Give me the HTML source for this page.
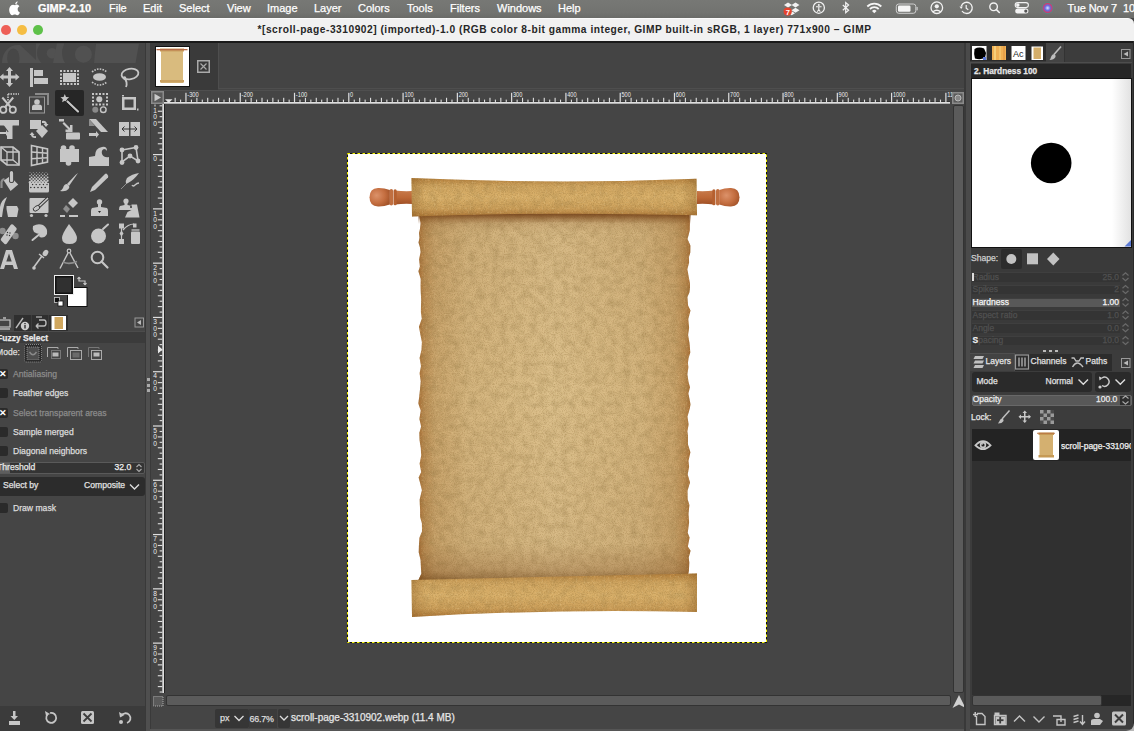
<!DOCTYPE html>
<html><head><meta charset="utf-8">
<style>
*{margin:0;padding:0;box-sizing:border-box}
html,body{width:1134px;height:731px;overflow:hidden;background:#454545;font-family:"Liberation Sans",sans-serif}
.a{position:absolute}
#menubar{left:0;top:0;width:1134px;height:18px;background:linear-gradient(180deg,#777875 0%,#727370 70%,#6a6b68 100%);color:#fff;font-size:12px}
#menubar span{position:absolute;top:2px;white-space:nowrap;font-size:11px;-webkit-text-stroke:0.25px #fff}
#titlebar{left:0;top:18px;width:1133.5px;height:23px;background:#f1f1f1;border-top:1px solid #fafafa;border-top-right-radius:6px}
.tl{position:absolute;top:6.3px;width:9.8px;height:9.8px;border-radius:50%}
#title{position:absolute;left:-2.5px;width:1134px;top:5px;text-align:center;font-size:10.2px;font-weight:bold;letter-spacing:0.52px;color:#262626;white-space:nowrap}
#blackline{left:0;top:41px;width:1134px;height:2px;background:#1a1a1a}
#toolbox{left:0;top:43px;width:146px;height:688px;background:#454545}
#sep1{left:145px;top:43px;width:6px;height:688px;background:#4f4f4f;border-left:1px solid #393939;border-right:1px solid #3a3a3a}
.txt{white-space:nowrap;line-height:1.15;-webkit-text-stroke:0.25px currentColor}
.b{font-weight:bold}
.cb{left:-2px;width:10px;height:10px;background:#2a2a2a;border-radius:2px;color:#fff;font-size:9px;line-height:10px;text-align:center;font-weight:bold}
.cb span{display:block}
.sl{left:971.7px;width:148.5px;height:9.5px;background:#343434;border-top:1px solid #3f3f3f}
.sll{left:972.5px;font-size:8.5px;line-height:10px}
.slv{right:15px;font-size:8.5px;line-height:10px;text-align:right}
#imgwin{left:151px;top:43px;width:815px;height:688px;background:#454545}
#sep2{left:966px;top:43px;width:4px;height:688px;background:#4d4d4d}
#dock{left:970px;top:43px;width:164px;height:688px;background:#393939}
</style></head><body>
<div id="menubar" class="a">
 <span style="left:38px;font-weight:bold">GIMP-2.10</span>
 <span style="left:109px">File</span>
 <span style="left:143px">Edit</span>
 <span style="left:179px">Select</span>
 <span style="left:227px">View</span>
 <span style="left:267px">Image</span>
 <span style="left:314px">Layer</span>
 <span style="left:358px">Colors</span>
 <span style="left:407px">Tools</span>
 <span style="left:450px">Filters</span>
 <span style="left:497px">Windows</span>
 <span style="left:558px">Help</span>
 <span style="left:1067.5px;font-size:11px;letter-spacing:-0.1px">Tue Nov 7</span>
 <span style="left:1123px;font-size:11px">10:</span>
</div>
<svg class="a" style="left:0;top:0" width="1134" height="18" viewBox="0 0 1134 18">
 <!-- apple -->
 <path d="M16.2 4.6 C17.6 4.6 18.7 5.3 19.4 6.2 C18.1 7 17.6 8.2 17.7 9.4 C17.8 10.8 18.6 11.8 19.9 12.4 C19.4 13.8 18.4 15.2 17.2 15.2 C16.2 15.2 15.9 14.6 14.8 14.6 C13.6 14.6 13.2 15.2 12.3 15.2 C10.9 15.2 9.6 13 9.3 11.2 C8.8 8 10.5 4.8 13 4.8 C13.9 4.8 14.5 5.3 15.1 5.3 C15.6 5.3 15.8 4.6 16.2 4.6 Z" fill="#fff"/>
 <path d="M15.2 4.2 C15.2 2.9 16.1 1.5 17.6 1.2 C17.7 2.6 16.6 4.1 15.2 4.2 Z" fill="#fff"/>
 <!-- dropbox -->
 <g fill="#f2f2f2">
  <path d="M788 2.5 L792 5 L788 7.5 L784 5 Z"/><path d="M795.5 2.5 L799.5 5 L795.5 7.5 L791.5 5 Z"/>
  <path d="M788 7.8 L792 10.3 L788 12.8 L784 10.3 Z"/><path d="M795.5 7.8 L799.5 10.3 L795.5 12.8 L791.5 10.3 Z"/>
  <path d="M791.7 11.2 L795 13.3 L791.7 15.3 L788.5 13.3 Z"/>
 </g>
 <circle cx="787.7" cy="11.6" r="4.1" fill="#e5432d"/>
 <text x="785.7" y="14.6" font-size="7.5" font-weight="bold" font-family="Liberation Sans" fill="#fff">7</text>
 <!-- accessibility -->
 <circle cx="818.8" cy="7.7" r="5.6" fill="none" stroke="#f2f2f2" stroke-width="1.3"/>
 <circle cx="818.8" cy="5" r="1" fill="#f2f2f2"/>
 <path d="M816 6.8 L821.6 6.8 M818.8 6.8 L818.8 9.5 M818.8 9.5 L817.3 11.7 M818.8 9.5 L820.3 11.7" stroke="#f2f2f2" stroke-width="1.1" fill="none"/>
 <!-- bluetooth -->
 <path d="M842.8 5 L848.6 10.3 L845.7 12.8 L845.7 2.5 L848.6 5 L842.8 10.3" stroke="#f2f2f2" stroke-width="1.2" fill="none"/>
 <!-- wifi -->
 <path d="M867.3 6.5 A10 10 0 0 1 881.3 6.5" stroke="#f5f5f5" stroke-width="1.8" fill="none"/>
 <path d="M869.9 9 A6.3 6.3 0 0 1 878.7 9" stroke="#f5f5f5" stroke-width="1.8" fill="none"/>
 <path d="M874.3 13.3 L872 10.9 A3.2 3.2 0 0 1 876.6 10.9 Z" fill="#f5f5f5"/>
 <!-- battery -->
 <rect x="896.3" y="4" width="19.5" height="9.3" rx="2.5" fill="none" stroke="#cfcfcf" stroke-width="1"/>
 <rect x="898" y="5.6" width="12.5" height="6.1" rx="1.2" fill="#f5f5f5"/>
 <rect x="916.5" y="7" width="1.2" height="3.3" fill="#cfcfcf"/>
 <!-- user -->
 <circle cx="936.8" cy="7.7" r="5.8" fill="none" stroke="#f2f2f2" stroke-width="1.3"/>
 <circle cx="936.8" cy="6.3" r="2.1" fill="#f2f2f2"/>
 <path d="M933 11.8 Q936.8 8.6 940.6 11.8" stroke="#f2f2f2" stroke-width="1.5" fill="none"/>
 <!-- time machine -->
 <path d="M961.3 6.2 A5.6 5.6 0 1 1 962 11" stroke="#f2f2f2" stroke-width="1.3" fill="none"/>
 <path d="M959.5 6.5 L962.8 6.5 L961.2 9 Z" fill="#f2f2f2"/>
 <path d="M966.2 5 L966.2 8.2 L968.3 9.8" stroke="#f2f2f2" stroke-width="1.2" fill="none"/>
 <!-- search -->
 <circle cx="993.6" cy="6.8" r="3.8" fill="none" stroke="#f2f2f2" stroke-width="1.4"/>
 <path d="M996.4 9.6 L999.3 12.5" stroke="#f2f2f2" stroke-width="1.6" stroke-linecap="round"/>
 <!-- control center -->
 <rect x="1015.2" y="2.6" width="13.2" height="5" rx="2.5" fill="none" stroke="#f2f2f2" stroke-width="1.1"/>
 <circle cx="1017.8" cy="5.1" r="1.8" fill="#f2f2f2"/>
 <rect x="1015.2" y="8.6" width="13.2" height="5" rx="2.5" fill="#f2f2f2"/>
 <circle cx="1025.8" cy="11.1" r="1.6" fill="#555"/>
 <!-- siri -->
 <defs><radialGradient id="siri" cx="0.5" cy="0.5" r="0.5"><stop offset="0" stop-color="#d8e6ff"/><stop offset="0.45" stop-color="#6a6adf"/><stop offset="0.8" stop-color="#c8406a"/><stop offset="1" stop-color="#2aa39a"/></radialGradient></defs>
 <circle cx="1047.6" cy="8" r="5.8" fill="url(#siri)"/>
</svg>

<div id="titlebar" class="a">
 <div class="tl" style="left:1px;background:#ee5f57"></div>
 <div class="tl" style="left:17px;background:#f5bd43"></div>
 <div class="tl" style="left:33px;background:#5ec149"></div>
 <div id="title">*[scroll-page-3310902] (imported)-1.0 (RGB color 8-bit gamma integer, GIMP built-in sRGB, 1 layer) 771x900 – GIMP</div>
</div>
<div id="blackline" class="a"></div>
<div id="toolbox" class="a"></div>
<svg class="a" style="left:0;top:0" width="150" height="731" viewBox="0 0 150 731">
<g id="wilber" clip-path="url(#wclip)">
 <clipPath id="wclip"><rect x="0" y="43.5" width="146" height="19.5"/></clipPath>
 <path d="M2 63 C2 52 9 45 18 45 L36 45 L36 63 Z" fill="#515151"/>
 <path d="M20 45 L36 45 L36 60 Z" fill="#474747"/>
 <ellipse cx="13.3" cy="58" rx="6.2" ry="9.5" fill="#474747"/>
 <path d="M36 43 L40 43 L45 63 L36 63 Z" fill="#515151"/>
 <circle cx="50" cy="53" r="13" fill="#474747"/>
 <circle cx="52" cy="53.2" r="5.3" fill="#515151"/>
 <path d="M57 43 L64 43 L66 63 L53 63 Z" fill="#515151"/>
 <circle cx="79.5" cy="53" r="17.5" fill="#474747"/>
 <circle cx="83.4" cy="54.3" r="8.5" fill="#515151"/>
 <path d="M96 43.5 L139 43.5 L135.5 63 L94 63 Z" fill="#515151"/>
</g>
<g fill="#c6c6c6" stroke="none">
 <!-- r1 move -->
 <path d="M9.5 67 L13 71 L11 71 L11 75.5 L15.5 75.5 L15.5 73.5 L19.5 77 L15.5 80.5 L15.5 78.5 L11 78.5 L11 83 L13 83 L9.5 87 L6 83 L8 83 L8 78.5 L3.5 78.5 L3.5 80.5 L-0.5 77 L3.5 73.5 L3.5 75.5 L8 75.5 L8 71 L6 71 Z"/>
 <!-- align -->
 <rect x="30" y="68" width="3" height="19"/>
 <rect x="34" y="70" width="9" height="6"/>
 <rect x="34" y="78" width="14" height="6"/>
 <!-- rect select -->
 <g><rect x="63" y="73" width="13" height="9"/>
 <rect x="60" y="70" width="2" height="2"/><rect x="63.5" y="70" width="2" height="2"/><rect x="67" y="70" width="2" height="2"/><rect x="70.5" y="70" width="2" height="2"/><rect x="74" y="70" width="2" height="2"/><rect x="77" y="70" width="2" height="2"/>
 <rect x="60" y="83" width="2" height="2"/><rect x="63.5" y="83" width="2" height="2"/><rect x="67" y="83" width="2" height="2"/><rect x="70.5" y="83" width="2" height="2"/><rect x="74" y="83" width="2" height="2"/><rect x="77" y="83" width="2" height="2"/>
 <rect x="60" y="73.5" width="2" height="2"/><rect x="60" y="77" width="2" height="2"/><rect x="60" y="80" width="2" height="2"/>
 <rect x="77" y="73.5" width="2" height="2"/><rect x="77" y="77" width="2" height="2"/><rect x="77" y="80" width="2" height="2"/></g>
 <!-- ellipse select -->
 <ellipse cx="99.5" cy="77" rx="6.5" ry="3.8"/>
 <path d="M92 72 Q99.5 66 107 72" fill="none" stroke="#c6c6c6" stroke-width="1.6" stroke-dasharray="1.6 1.2"/>
 <path d="M92 82 Q99.5 88 107 82" fill="none" stroke="#c6c6c6" stroke-width="1.6" stroke-dasharray="1.6 1.2"/>
 <!-- lasso -->
 <ellipse cx="130" cy="74" rx="8.5" ry="5.2" fill="none" stroke="#c6c6c6" stroke-width="1.8" transform="rotate(-10 130 74)"/>
 <path d="M124 78 Q128 82 126 87" fill="none" stroke="#c6c6c6" stroke-width="1.8"/>
 <circle cx="124.5" cy="78" r="1.8"/>
 <!-- r2 scissors -->
 <path d="M8 94 L19 94 M8 94 L8 101" stroke="#c6c6c6" stroke-width="1.6" stroke-dasharray="1.5 1" fill="none"/>
 <path d="M2.3 97.5 L11 107.5 M13.2 97.5 L4.8 107.5" stroke="#c6c6c6" stroke-width="2" fill="none"/>
 <circle cx="3.3" cy="109.8" r="3.1" fill="none" stroke="#c6c6c6" stroke-width="1.8"/>
 <circle cx="12.8" cy="109.8" r="3.1" fill="none" stroke="#c6c6c6" stroke-width="1.8"/>
 <!-- foreground select -->
 <path d="M35 93 L49 93 L49 105 L47 105 L47 95 L35 95 Z" fill="#8a8a8a"/>
 <rect x="29.5" y="97" width="15" height="16" fill="none" stroke="#9a9a9a" stroke-width="1"/>
 <circle cx="37" cy="102" r="2.8"/>
 <path d="M32 107 Q32 104.5 35 104.5 L39 104.5 Q42 104.5 42 107 L42 110 L32 110 Z"/>
</g>
<!-- magic wand active -->
<rect x="55" y="90" width="29" height="26" rx="2" fill="#262626"/>
<g fill="#c6c6c6">
 <path d="M64.80 94.00 L66.03 96.90 L69.17 97.18 L66.80 99.25 L67.50 102.32 L64.80 100.70 L62.10 102.32 L62.80 99.25 L60.43 97.18 L63.57 96.90 Z"/>
 <path d="M67.5 101.5 L78 111.5" stroke="#111" stroke-width="3.4" stroke-linecap="round"/>
 <path d="M67.5 101.5 L78 111.5" stroke="#c6c6c6" stroke-width="2.3" stroke-linecap="round"/>
</g>
<g fill="#c6c6c6">
 <!-- by color select -->
 <g><rect x="92" y="93" width="2" height="2"/><rect x="95.5" y="93" width="2" height="2"/><rect x="99" y="93" width="2" height="2"/><rect x="102.5" y="93" width="2" height="2"/><rect x="106" y="93" width="2" height="2"/>
 <rect x="92" y="103.5" width="2" height="2"/><rect x="95.5" y="103.5" width="2" height="2"/><rect x="99" y="103.5" width="2" height="2"/><rect x="102.5" y="103.5" width="2" height="2"/><rect x="106" y="103.5" width="2" height="2"/>
 <rect x="92" y="96.5" width="2" height="2"/><rect x="92" y="100" width="2" height="2"/><rect x="106" y="96.5" width="2" height="2"/><rect x="106" y="100" width="2" height="2"/></g>
 <circle cx="99.3" cy="99.3" r="3"/>
 <circle cx="95.3" cy="109.7" r="3" fill="#8a8a8a"/>
 <circle cx="103.3" cy="109.7" r="2.8" fill="none" stroke="#c6c6c6" stroke-width="1.4"/>
 <!-- crop -->
 <path d="M122 97 L136 97 L136 110 L122 110 Z M124.5 99.5 L124.5 107.5 L133.5 107.5 L133.5 99.5 Z" fill-rule="evenodd"/>
 <rect x="122" y="95" width="2" height="1.5"/><rect x="137" y="108.5" width="1.5" height="2"/>
 <!-- r3 unified transform -->
 <path d="M0 120 L19 120 L19 125.5 L12.5 125.5 L12.5 139 L7 139 L7 133.5 L8.5 131.5 L7 129.5 Z"/>
 <path d="M0 120 L12.5 120 L12.5 125.5 L0 125.5 Z"/>
 <path d="M0 132 L6 132 L6 130 L8.5 133 L6 136 L6 134 L0 134 Z"/>
 <!-- rotate -->
 <rect x="30" y="120" width="11" height="9"/>
 <path d="M42 125 L48 131 L42 138 L36 131 Z"/>
 <path d="M42 121 Q46 120 47 124 L48.5 124 L46 127 L43.5 124 L45 124 Q44.5 122.5 42 123 Z"/>
 <path d="M36 138 Q31.5 138.5 31 135 L29.5 135 L32 132 L34.5 135 L33 135 Q33.3 136.5 36 136 Z"/>
 <!-- scale -->
 <rect x="59" y="119" width="5" height="2.5"/>
 <path d="M64 122 L70 128 L70 125 L72.5 125 L72.5 132 L65.5 132 L65.5 129.5 L68.5 129.5 L62.5 123.5 Z"/>
 <rect x="66" y="132.5" width="14" height="7" rx="1"/>
 <!-- shear -->
 <path d="M89 119 L96 119 L108 132 L101 132 Z"/>
 <path d="M89 119 L89 126 L95 126 Z" fill="#8e8e8e"/>
 <path d="M89 133 L96 133 L96 131 L99 134.5 L96 138 L96 136 L89 136 Z"/>
 <!-- flip -->
 <path d="M119 122 L129 122 L129 136 L119 136 Z M130.5 122 L140 122 L140 136 L130.5 136 Z"/>
 <path d="M122 129 L137 129 M122 129 L124.5 126.5 M122 129 L124.5 131.5 M137 129 L134.5 126.5 M137 129 L134.5 131.5" stroke="#333" stroke-width="1" fill="none"/>
 <!-- r4 perspective cube -->
 <path d="M1 147 L13 147 L19 152 L19 165 L7 165 L1 160 Z" fill="none" stroke="#c6c6c6" stroke-width="1.7"/>
 <path d="M1 147 L7 152 L19 152 M7 152 L7 165 M1 160 L13 160 L19 165 M13 147 L13 160" stroke="#c6c6c6" stroke-width="1.3" fill="none"/>
 <!-- grid -->
 <path d="M31.5 145.5 L47.5 149 L47.5 162 L31.5 165.5 Z" fill="none" stroke="#c6c6c6" stroke-width="1.6"/>
 <path d="M37 146.5 L37 164.5 M42.5 147.7 L42.5 163.3 M31.5 152 L47.5 153.3 M31.5 158.7 L47.5 157.7" stroke="#c6c6c6" stroke-width="1.4"/>
 <!-- cage -->
 <path d="M60 149 L79 149 L79 162 L60 162 Z"/>
 <circle cx="63.5" cy="148" r="2.8"/><circle cx="72" cy="148" r="2.8"/><circle cx="68.5" cy="163" r="2.8"/>
 <!-- warp wave -->
 <path d="M89 166 L109 166 L109 157 Q104 158 102 154 Q101 150 104 149 Q106 149 107 151 Q107 146 102 147 Q95 148 95 156 L89 157 Z"/>
 <!-- handle -->
 <path d="M122 150 L136 147.5 L138 161 L130 156 L122 162 Z" fill="none" stroke="#c6c6c6" stroke-width="1.6"/>
 <circle cx="122" cy="150" r="2.4"/><circle cx="136" cy="147.5" r="2.4"/><circle cx="138" cy="161" r="2.4"/><circle cx="130" cy="156" r="2.4"/><circle cx="122" cy="162.5" r="2.4"/>
 <!-- r5 bucket -->
 <path d="M1.5 188 L1.5 182 Q2 179.5 4.5 179" stroke="#8e8e8e" stroke-width="2.2" fill="none"/>
 <path d="M3.8 180.5 L10 176.3 L18.2 184.5 L10.6 191 Z"/>
 <rect x="9" y="170.5" width="5" height="12.5" rx="2.5" fill="#333"/>
 <rect x="9.8" y="171" width="3.4" height="11.3" rx="1.7"/>
 <!-- blend -->
 <path d="M29 183 L49 183 L49 191 Q49 192.5 47.5 192.5 L30.5 192.5 Q29 192.5 29 191 Z"/>
 <g fill="#333"><circle cx="30.80" cy="187.5" r="0.8"/><circle cx="34.40" cy="187.5" r="0.8"/><circle cx="38.00" cy="187.5" r="0.8"/><circle cx="41.60" cy="187.5" r="0.8"/><circle cx="45.20" cy="187.5" r="0.8"/><circle cx="32.60" cy="184.5" r="0.7"/><circle cx="36.20" cy="184.5" r="0.7"/><circle cx="39.80" cy="184.5" r="0.7"/><circle cx="43.40" cy="184.5" r="0.7"/><circle cx="47.00" cy="184.5" r="0.7"/></g>
</g>
<g fill="#c6c6c6"><circle cx="30.00" cy="172.50" r="0.45"/><circle cx="33.20" cy="172.50" r="0.45"/><circle cx="36.40" cy="172.50" r="0.45"/><circle cx="39.60" cy="172.50" r="0.45"/><circle cx="42.80" cy="172.50" r="0.45"/><circle cx="46.00" cy="172.50" r="0.45"/><circle cx="31.60" cy="174.15" r="0.59"/><circle cx="34.80" cy="174.15" r="0.59"/><circle cx="38.00" cy="174.15" r="0.59"/><circle cx="41.20" cy="174.15" r="0.59"/><circle cx="44.40" cy="174.15" r="0.59"/><circle cx="47.60" cy="174.15" r="0.59"/><circle cx="30.00" cy="175.80" r="0.73"/><circle cx="33.20" cy="175.80" r="0.73"/><circle cx="36.40" cy="175.80" r="0.73"/><circle cx="39.60" cy="175.80" r="0.73"/><circle cx="42.80" cy="175.80" r="0.73"/><circle cx="46.00" cy="175.80" r="0.73"/><circle cx="31.60" cy="177.45" r="0.87"/><circle cx="34.80" cy="177.45" r="0.87"/><circle cx="38.00" cy="177.45" r="0.87"/><circle cx="41.20" cy="177.45" r="0.87"/><circle cx="44.40" cy="177.45" r="0.87"/><circle cx="47.60" cy="177.45" r="0.87"/><circle cx="30.00" cy="179.10" r="1.01"/><circle cx="33.20" cy="179.10" r="1.01"/><circle cx="36.40" cy="179.10" r="1.01"/><circle cx="39.60" cy="179.10" r="1.01"/><circle cx="42.80" cy="179.10" r="1.01"/><circle cx="46.00" cy="179.10" r="1.01"/><circle cx="31.60" cy="180.75" r="1.15"/><circle cx="34.80" cy="180.75" r="1.15"/><circle cx="38.00" cy="180.75" r="1.15"/><circle cx="41.20" cy="180.75" r="1.15"/><circle cx="44.40" cy="180.75" r="1.15"/><circle cx="47.60" cy="180.75" r="1.15"/><circle cx="30.00" cy="182.40" r="1.29"/><circle cx="33.20" cy="182.40" r="1.29"/><circle cx="36.40" cy="182.40" r="1.29"/><circle cx="39.60" cy="182.40" r="1.29"/><circle cx="42.80" cy="182.40" r="1.29"/><circle cx="46.00" cy="182.40" r="1.29"/></g>
<g fill="#c6c6c6">
 <!-- paintbrush -->
 <path d="M75.5 175 L78 173 L69 186 L67 184 Z"/>
 <path d="M67 184 Q64 184 63 188 Q62 190 60 191 Q66 192 68.5 189 Q70 187 69 186 Z"/>
 <!-- pencil -->
 <path d="M107 174 Q109 176 108 177.5 L95 190 L90 192 L92 187 L105 174 Q106 173 107 174 Z"/>
 <!-- ink -->
 <path d="M139 173 Q132 174 127 178 Q125 181 126 184 L128 183 Q134 180 139 173 Z"/>
 <path d="M126 184 L121 189" stroke="#8e8e8e" stroke-width="1"/>
 <path d="M132 185 Q133 187 135 185 Q137 183 139 183" stroke="#c6c6c6" stroke-width="1.3" fill="none"/>
 <!-- r6 airbrush -->
 <path d="M7 197 Q1 200 0 207 L0 217 L2 217 L3 210 Q4 203 7 197 Z"/>
 <path d="M6.5 206 L17 206 L18.5 209 L17 217 L8 217 L6.5 209 Z"/>
 <!-- mypaint -->
 <rect x="29.5" y="198" width="19" height="15" rx="1"/>
 <circle cx="31.5" cy="215.5" r="1.6"/><circle cx="46" cy="215.5" r="1.6"/>
 <path d="M47.5 198.5 L39 206.5" stroke="#333" stroke-width="3.4" stroke-linecap="round"/>
 <path d="M47.5 198.5 L39 206.5" stroke="#c6c6c6" stroke-width="1.7" stroke-linecap="round"/>
 <ellipse cx="36.5" cy="208.3" rx="3.6" ry="2.2" transform="rotate(-35 36.5 208.3)" fill="#c6c6c6" stroke="#333" stroke-width="0.9"/>
 <!-- eraser -->
 <path d="M73 198 L78 203 L73 208 L68 203 Z"/>
 <path d="M66 205 L70 209 L67 213 L63 209 Z" fill="#8e8e8e"/>
 <rect x="60" y="215" width="5" height="2"/><rect x="69" y="215" width="9" height="2"/>
 <!-- clone -->
 <circle cx="99.5" cy="202" r="2.7"/>
 <path d="M98 204 L101 204 L101 207 L107 208 Q108 209 108 211 L108 216 L91 216 L91 211 Q91 209 92 208 L98 207 Z"/>
 <path d="M98 211 L101 211 L99.5 213 Z" fill="#222"/>
 <!-- persp clone -->
 <circle cx="126" cy="201" r="2.6"/>
 <path d="M124.5 203 L127.5 203 L127.5 205 L132 206 Q132.5 207 132.5 210 L119 210 Q119 207 120 206 L124.5 205 Z"/>
 <path d="M131.5 204.5 L137 204.5 L139.5 217.5 L125 217.5 L127.5 212 L131.5 210 Z"/>
 <circle cx="131" cy="207" r="0.9" fill="#222"/>
 <!-- r7 heal -->
 <circle cx="2.5" cy="231" r="3.2" fill="#8e8e8e"/>
 <circle cx="15.5" cy="236" r="3.2" fill="#8e8e8e"/>
 <path d="M12 226 L15 229 L5.5 242.5 L2.5 239.5 Z" stroke="#c6c6c6" stroke-width="3.4" stroke-linejoin="round"/>
 <g fill="#333"><circle cx="7.5" cy="232.5" r="0.7"/><circle cx="10" cy="233" r="0.7"/><circle cx="7" cy="235" r="0.7"/><circle cx="9.5" cy="235.5" r="0.7"/></g>
 <!-- smudge -->
 <path d="M33 226 Q38 223 43 225 Q48 228 47 234 Q45 238 41 237.5 Q38 237 40 234 Q37 234 34 232 Q32 229 33 226 Z"/>
 <path d="M41 233 L32.5 240" stroke="#c6c6c6" stroke-width="2" stroke-linecap="round"/>
 <!-- blur -->
 <path d="M69 224 Q77 234 77 238 Q77 244 69.5 244 Q62 244 62 238 Q62 234 69 224 Z"/>
 <!-- dodge -->
 <circle cx="98.5" cy="236" r="7.5"/>
 <path d="M103 229 L108 224.5" stroke="#c6c6c6" stroke-width="2" stroke-linecap="round"/>
 <!-- paths -->
 <rect x="119" y="223.5" width="5" height="5"/><rect x="119" y="239" width="5" height="5"/>
 <path d="M121.5 228 L121.5 239" stroke="#c6c6c6" stroke-width="1.2"/>
 <path d="M121.5 230.5 L123.5 233.5 L121.5 236.5 L119.5 233.5 Z"/>
 <path d="M123 230 Q128 224 134 224" stroke="#c6c6c6" stroke-width="1.2" fill="none"/>
 <rect x="133" y="223.5" width="3.5" height="4"/>
 <rect x="131" y="231.5" width="9" height="12.5" rx="1"/>
 <rect x="131.5" y="229" width="8" height="2" fill="#9a9a9a"/>
 <!-- r8 text A -->
 <path d="M6 250 L12 250 L18 269 L14 269 L12.7 265 L5.3 265 L4 269 L0 269 Z M6.3 261.5 L11.7 261.5 L9 253.5 Z" fill-rule="evenodd"/>
 <!-- color picker -->
 <ellipse cx="45.5" cy="253" rx="2.5" ry="3.4" transform="rotate(35 45.5 253)"/>
 <path d="M39 254 L44 258" stroke="#c6c6c6" stroke-width="1.5"/>
 <path d="M42 256 L34 267" stroke="#c6c6c6" stroke-width="1.6"/>
 <circle cx="34" cy="268" r="1.8"/>
 <!-- measure -->
 <circle cx="69" cy="251" r="1.8" fill="none" stroke="#c6c6c6" stroke-width="1.2"/>
 <path d="M68 253 L60 268.5 M70 253 L78 268" stroke="#c6c6c6" stroke-width="1.4" fill="none"/>
 <path d="M63 262 Q69 265 77 261.5" stroke="#8e8e8e" stroke-width="1.6" fill="none"/>
 <!-- zoom -->
 <circle cx="97.5" cy="257.5" r="5.8" fill="none" stroke="#c6c6c6" stroke-width="2"/>
 <path d="M101.5 261.5 L107.5 267.5" stroke="#c6c6c6" stroke-width="2.2" stroke-linecap="round"/>
</g>
<!-- fg/bg -->
<rect x="67.5" y="287.5" width="19.5" height="19" fill="#fff" stroke="#111" stroke-width="1"/>
<rect x="54.5" y="275.5" width="19" height="19" fill="#111" stroke="#eee" stroke-width="1"/>
<rect x="56.5" y="277.5" width="15" height="15" fill="#303030"/>
<path d="M79 277 L79 281 L85 281 L85 285 M85 285 L83.5 283 M85 285 L86.5 283 M79 277 L77.5 279 M79 277 L80.5 279" stroke="#c6c6c6" stroke-width="1.2" fill="none"/>
<rect x="54.5" y="297.5" width="5" height="5" fill="#111" stroke="#ccc" stroke-width="0.8"/>
<rect x="58" y="301" width="5" height="5" fill="#fff" stroke="#111" stroke-width="0.8"/>
</svg>

<!-- tool options tabs -->
<div class="a" style="left:14px;top:315px;width:54px;height:16px;background:#2f2f2f"></div>
<div class="a" style="left:31px;top:315px;width:1px;height:16px;background:#3c3c3c"></div>
<div class="a" style="left:48px;top:315px;width:1px;height:16px;background:#3c3c3c"></div>
<svg class="a" style="left:0;top:314px" width="150" height="20" viewBox="0 314 150 20">
 <g fill="none" stroke="#bbb" stroke-width="1.3">
  <rect x="-2" y="320" width="12" height="7"/>
  <path d="M3 318 L6 318 M-2 329 L10 329"/>
 </g>
 <path d="M16 328 L23 318" stroke="#bbb" stroke-width="1.4"/>
 <circle cx="25" cy="326" r="4.2" fill="#ccc"/>
 <rect x="24.3" y="325" width="1.4" height="3.5" fill="#2f2f2f"/><rect x="24.3" y="323" width="1.4" height="1.2" fill="#2f2f2f"/>
 <path d="M39 320 L44 320 Q46 320 46 323 Q46 326 44 326 L36 326 M36 326 L38.5 323.5 M36 326 L38.5 328.5" stroke="#bbb" stroke-width="1.4" fill="none"/>
 <path d="M42 317 L36 317" stroke="#bbb" stroke-width="1.2"/>
 <rect x="51.5" y="316" width="14.5" height="14" fill="#fff"/>
 <rect x="54.5" y="317" width="8.5" height="12" fill="#d0a75e"/>
 <rect x="135" y="318" width="8.5" height="9" fill="none" stroke="#999" stroke-width="1"/>
 <path d="M137 322.5 L141 320 L141 325 Z" fill="#bbb"/>
</svg>
<div class="a" style="left:0;top:331px;width:145px;height:12px;background:#3b3b3b;border-top:1px solid #4c4c4c"></div>

<div class="a txt b" style="left:-3px;top:333.5px;font-size:8.5px;color:#e8e8e8">Fuzzy Select</div>
<div class="a txt" style="left:-4px;top:348px;font-size:8.6px;color:#ddd">Mode:</div>
<!-- mode buttons -->
<div class="a" style="left:24px;top:344px;width:18px;height:18px;background:#2b2b2b;border-radius:2px"></div>
<svg class="a" style="left:0;top:340px" width="150" height="25" viewBox="0 340 150 25">
 <rect x="24.5" y="344.5" width="17" height="17.5" rx="1.5" fill="none" stroke="#8a8a8a" stroke-width="1" stroke-dasharray="1 1"/>
 <rect x="27" y="347" width="12" height="12.5" fill="#4e4e4e" stroke="#9a9a9a" stroke-width="0.8" stroke-dasharray="1 1"/>
 <path d="M29.5 352 Q33 357.5 36.5 352" stroke="#8a8a8a" stroke-width="1.4" fill="none"/>
 <g stroke="#aaa" stroke-width="1" fill="none">
  <path d="M47.5 357 L47.5 347.5 L58 347.5 L58 349"/>
  <rect x="51.5" y="350.5" width="9" height="8" stroke-dasharray="1 1"/>
  <path d="M67.5 357 L67.5 347.5 L78 347.5 L78 349"/>
  <rect x="70.5" y="350.5" width="11" height="9"/>
  <path d="M88.5 357 L88.5 347.5 L99 347.5 L99 349" stroke="#777"/>
  <rect x="91.5" y="350.5" width="10" height="9"/>
 </g>
 <rect x="52.5" y="352.5" width="6" height="4" fill="#bbb"/>
 <rect x="72.5" y="352.5" width="7" height="5" fill="#6a6a6a"/>
 <rect x="93.5" y="352.5" width="6" height="4" fill="#bbb"/>
</svg>
<!-- checkboxes -->
<div class="a cb" style="top:369px"><span>✕</span></div>
<div class="a txt" style="left:13px;top:370px;font-size:8.6px;color:#8c8c8c">Antialiasing</div>
<div class="a cb" style="top:388px"></div>
<div class="a txt" style="left:13px;top:389px;font-size:8.6px;color:#dcdcdc">Feather edges</div>
<div class="a cb" style="top:408px"><span>✕</span></div>
<div class="a txt" style="left:13px;top:409px;font-size:8.6px;color:#8c8c8c">Select transparent areas</div>
<div class="a cb" style="top:427px"></div>
<div class="a txt" style="left:13px;top:428px;font-size:8.6px;color:#dcdcdc">Sample merged</div>
<div class="a cb" style="top:446px"></div>
<div class="a txt" style="left:13px;top:447px;font-size:8.6px;color:#dcdcdc">Diagonal neighbors</div>
<!-- threshold -->
<div class="a" style="left:-2px;top:462px;width:147px;height:11.5px;background:#343434;border:1px solid #5a5a5a;border-radius:2px"></div>
<div class="a" style="left:-1px;top:463px;width:11px;height:9.5px;background:#5e5e5e"></div>
<div class="a txt" style="left:-3px;top:463px;font-size:8.6px;color:#e8e8e8">Threshold</div>
<div class="a txt" style="left:114.5px;top:463px;font-size:8.6px;color:#f0f0f0">32.0</div>
<svg class="a" style="left:134px;top:462px" width="10" height="12" viewBox="0 0 10 12"><path d="M2.5 5 L5 2.5 L7.5 5 M2.5 7 L5 9.5 L7.5 7" stroke="#aaa" stroke-width="1.1" fill="none"/></svg>
<!-- select by -->
<div class="a" style="left:-3px;top:477px;width:148px;height:19px;background:#2c2c2c;border-radius:3px"></div>
<div class="a txt" style="left:3px;top:481px;font-size:8.6px;color:#e0e0e0">Select by</div>
<div class="a txt" style="left:84px;top:481px;font-size:8.6px;color:#e0e0e0">Composite</div>
<svg class="a" style="left:128px;top:481px" width="14" height="12" viewBox="0 0 14 12"><path d="M2 3.5 L6.5 8 L11 3.5" stroke="#ddd" stroke-width="1.4" fill="none"/></svg>
<div class="a cb" style="top:503px"></div>
<div class="a txt" style="left:13px;top:504px;font-size:8.6px;color:#dcdcdc">Draw mask</div>
<!-- bottom toolbox buttons -->
<div class="a" style="left:0;top:706px;width:145px;height:25px;background:#3b3b3b"></div>
<svg class="a" style="left:0;top:706px" width="150" height="25" viewBox="0 706 150 25">
 <g fill="#c6c6c6">
  <rect x="13" y="711" width="2.5" height="6"/>
  <path d="M10.5 716 L18 716 L14.3 720 Z"/>
  <rect x="9" y="721" width="11" height="4"/>
 </g>
 <path d="M47.5 714.5 A5 5 0 1 0 50 713" stroke="#c6c6c6" stroke-width="1.8" fill="none"/>
 <path d="M45 711 L46 716 L50 714 Z" fill="#c6c6c6"/>
 <rect x="81" y="711" width="13" height="13" rx="1.5" fill="#c6c6c6"/>
 <path d="M83.5 713.5 L91.5 721.5 M91.5 713.5 L83.5 721.5" stroke="#3f3f3f" stroke-width="1.8"/>
 <path d="M127 723 A5 5 0 1 0 121 716" stroke="#c6c6c6" stroke-width="1.8" fill="none"/>
 <path d="M119 712 L120 717.5 L124.5 715 Z" fill="#c6c6c6"/>
 <circle cx="121" cy="722" r="2" fill="#c6c6c6"/>
</svg>

<div id="sep1" class="a"></div>
<div id="imgwin" class="a"></div>
<!-- image window -->
<div class="a" style="left:150px;top:43px;width:68px;height:47px;background:#3a3a3a"></div>
<div class="a" style="left:218px;top:43px;width:748px;height:46px;border-left:1px solid #4e4e4e;border-bottom:1px solid #4e4e4e;background:#444"></div>
<div class="a" style="left:154.5px;top:45.5px;width:35px;height:41px;background:#fff;border:1px solid #111"></div>
<svg class="a" style="left:155px;top:46px" width="34" height="40" viewBox="0 0 34 40">
 <rect x="6" y="3" width="22" height="34" fill="#d9bb7e"/>
 <rect x="5" y="2.5" width="24" height="3" fill="#c9a060"/>
 <rect x="5" y="34" width="24" height="2.5" fill="#c9a060"/>
 <rect x="1.5" y="3" width="31" height="1.3" fill="#b86a45"/>
</svg>
<svg class="a" style="left:197px;top:60px" width="13" height="13" viewBox="0 0 13 13">
 <rect x="0.75" y="0.75" width="11.5" height="11.5" fill="none" stroke="#aaa" stroke-width="1.5"/>
 <path d="M3.5 3.5 L9.5 9.5 M9.5 3.5 L3.5 9.5" stroke="#aaa" stroke-width="1.2"/>
</svg>
<!-- ruler area -->

<div class="a" style="left:150px;top:90px;width:800px;height:1px;background:#4f4f4f"></div>
<div class="a" style="left:164px;top:104.5px;width:786px;height:1px;background:#222"></div>
<div class="a" style="left:164.3px;top:104px;width:1px;height:589px;background:#222"></div>
<svg class="a" style="left:151px;top:91px" width="13" height="13" viewBox="0 0 13 13">
 <rect x="0.75" y="0.75" width="11.5" height="11.5" fill="#5a5a5a" stroke="#8a8a8a" stroke-width="1.5"/>
 <path d="M3.5 2.8 L10 6.5 L3.5 10.2 Z" fill="#c8c8c8"/>
</svg>
<div class="a" style="left:165px;top:105px;width:785px;height:588px;background:#454545"></div>
<svg class="a" style="left:0;top:0" width="1134" height="731" viewBox="0 0 1134 731">
<g fill="#dedede">
<rect x="164" y="102" width="786" height="1.7"/>
<rect x="164" y="101" width="786" height="1" fill="#2a2a2a" opacity="0.6"/>
<rect x="174.60" y="97.8" width="1.1" height="4.5"/>
<rect x="180.03" y="99.6" width="1.1" height="2.6"/>
<rect x="185.36" y="92.8" width="1.2" height="9.5"/>
<text x="187.26" y="97.4" font-size="6.6" font-family="Liberation Sans" fill="#ececec" textLength="11.5" lengthAdjust="spacingAndGlyphs">-300</text>
<rect x="190.89" y="99.6" width="1.1" height="2.6"/>
<rect x="196.32" y="97.8" width="1.1" height="4.5"/>
<rect x="201.74" y="99.6" width="1.1" height="2.6"/>
<rect x="207.17" y="97.8" width="1.1" height="4.5"/>
<rect x="212.60" y="99.6" width="1.1" height="2.6"/>
<rect x="218.03" y="97.8" width="1.1" height="4.5"/>
<rect x="223.46" y="99.6" width="1.1" height="2.6"/>
<rect x="228.88" y="97.8" width="1.1" height="4.5"/>
<rect x="234.31" y="99.6" width="1.1" height="2.6"/>
<rect x="239.64" y="92.8" width="1.2" height="9.5"/>
<text x="241.54" y="97.4" font-size="6.6" font-family="Liberation Sans" fill="#ececec" textLength="11.5" lengthAdjust="spacingAndGlyphs">-200</text>
<rect x="245.17" y="99.6" width="1.1" height="2.6"/>
<rect x="250.60" y="97.8" width="1.1" height="4.5"/>
<rect x="256.02" y="99.6" width="1.1" height="2.6"/>
<rect x="261.45" y="97.8" width="1.1" height="4.5"/>
<rect x="266.88" y="99.6" width="1.1" height="2.6"/>
<rect x="272.31" y="97.8" width="1.1" height="4.5"/>
<rect x="277.74" y="99.6" width="1.1" height="2.6"/>
<rect x="283.16" y="97.8" width="1.1" height="4.5"/>
<rect x="288.59" y="99.6" width="1.1" height="2.6"/>
<rect x="293.92" y="92.8" width="1.2" height="9.5"/>
<text x="295.82" y="97.4" font-size="6.6" font-family="Liberation Sans" fill="#ececec" textLength="11.5" lengthAdjust="spacingAndGlyphs">-100</text>
<rect x="299.45" y="99.6" width="1.1" height="2.6"/>
<rect x="304.88" y="97.8" width="1.1" height="4.5"/>
<rect x="310.30" y="99.6" width="1.1" height="2.6"/>
<rect x="315.73" y="97.8" width="1.1" height="4.5"/>
<rect x="321.16" y="99.6" width="1.1" height="2.6"/>
<rect x="326.59" y="97.8" width="1.1" height="4.5"/>
<rect x="332.02" y="99.6" width="1.1" height="2.6"/>
<rect x="337.44" y="97.8" width="1.1" height="4.5"/>
<rect x="342.87" y="99.6" width="1.1" height="2.6"/>
<rect x="348.20" y="92.8" width="1.2" height="9.5"/>
<text x="350.10" y="97.4" font-size="6.6" font-family="Liberation Sans" fill="#ececec" textLength="3.1" lengthAdjust="spacingAndGlyphs">0</text>
<rect x="353.73" y="99.6" width="1.1" height="2.6"/>
<rect x="359.16" y="97.8" width="1.1" height="4.5"/>
<rect x="364.58" y="99.6" width="1.1" height="2.6"/>
<rect x="370.01" y="97.8" width="1.1" height="4.5"/>
<rect x="375.44" y="99.6" width="1.1" height="2.6"/>
<rect x="380.87" y="97.8" width="1.1" height="4.5"/>
<rect x="386.30" y="99.6" width="1.1" height="2.6"/>
<rect x="391.72" y="97.8" width="1.1" height="4.5"/>
<rect x="397.15" y="99.6" width="1.1" height="2.6"/>
<rect x="402.48" y="92.8" width="1.2" height="9.5"/>
<text x="404.38" y="97.4" font-size="6.6" font-family="Liberation Sans" fill="#ececec" textLength="9.3" lengthAdjust="spacingAndGlyphs">100</text>
<rect x="408.01" y="99.6" width="1.1" height="2.6"/>
<rect x="413.44" y="97.8" width="1.1" height="4.5"/>
<rect x="418.86" y="99.6" width="1.1" height="2.6"/>
<rect x="424.29" y="97.8" width="1.1" height="4.5"/>
<rect x="429.72" y="99.6" width="1.1" height="2.6"/>
<rect x="435.15" y="97.8" width="1.1" height="4.5"/>
<rect x="440.58" y="99.6" width="1.1" height="2.6"/>
<rect x="446.00" y="97.8" width="1.1" height="4.5"/>
<rect x="451.43" y="99.6" width="1.1" height="2.6"/>
<rect x="456.76" y="92.8" width="1.2" height="9.5"/>
<text x="458.66" y="97.4" font-size="6.6" font-family="Liberation Sans" fill="#ececec" textLength="9.3" lengthAdjust="spacingAndGlyphs">200</text>
<rect x="462.29" y="99.6" width="1.1" height="2.6"/>
<rect x="467.72" y="97.8" width="1.1" height="4.5"/>
<rect x="473.14" y="99.6" width="1.1" height="2.6"/>
<rect x="478.57" y="97.8" width="1.1" height="4.5"/>
<rect x="484.00" y="99.6" width="1.1" height="2.6"/>
<rect x="489.43" y="97.8" width="1.1" height="4.5"/>
<rect x="494.86" y="99.6" width="1.1" height="2.6"/>
<rect x="500.28" y="97.8" width="1.1" height="4.5"/>
<rect x="505.71" y="99.6" width="1.1" height="2.6"/>
<rect x="511.04" y="92.8" width="1.2" height="9.5"/>
<text x="512.94" y="97.4" font-size="6.6" font-family="Liberation Sans" fill="#ececec" textLength="9.3" lengthAdjust="spacingAndGlyphs">300</text>
<rect x="516.57" y="99.6" width="1.1" height="2.6"/>
<rect x="522.00" y="97.8" width="1.1" height="4.5"/>
<rect x="527.42" y="99.6" width="1.1" height="2.6"/>
<rect x="532.85" y="97.8" width="1.1" height="4.5"/>
<rect x="538.28" y="99.6" width="1.1" height="2.6"/>
<rect x="543.71" y="97.8" width="1.1" height="4.5"/>
<rect x="549.14" y="99.6" width="1.1" height="2.6"/>
<rect x="554.56" y="97.8" width="1.1" height="4.5"/>
<rect x="559.99" y="99.6" width="1.1" height="2.6"/>
<rect x="565.32" y="92.8" width="1.2" height="9.5"/>
<text x="567.22" y="97.4" font-size="6.6" font-family="Liberation Sans" fill="#ececec" textLength="9.3" lengthAdjust="spacingAndGlyphs">400</text>
<rect x="570.85" y="99.6" width="1.1" height="2.6"/>
<rect x="576.28" y="97.8" width="1.1" height="4.5"/>
<rect x="581.70" y="99.6" width="1.1" height="2.6"/>
<rect x="587.13" y="97.8" width="1.1" height="4.5"/>
<rect x="592.56" y="99.6" width="1.1" height="2.6"/>
<rect x="597.99" y="97.8" width="1.1" height="4.5"/>
<rect x="603.42" y="99.6" width="1.1" height="2.6"/>
<rect x="608.84" y="97.8" width="1.1" height="4.5"/>
<rect x="614.27" y="99.6" width="1.1" height="2.6"/>
<rect x="619.60" y="92.8" width="1.2" height="9.5"/>
<text x="621.50" y="97.4" font-size="6.6" font-family="Liberation Sans" fill="#ececec" textLength="9.3" lengthAdjust="spacingAndGlyphs">500</text>
<rect x="625.13" y="99.6" width="1.1" height="2.6"/>
<rect x="630.56" y="97.8" width="1.1" height="4.5"/>
<rect x="635.98" y="99.6" width="1.1" height="2.6"/>
<rect x="641.41" y="97.8" width="1.1" height="4.5"/>
<rect x="646.84" y="99.6" width="1.1" height="2.6"/>
<rect x="652.27" y="97.8" width="1.1" height="4.5"/>
<rect x="657.70" y="99.6" width="1.1" height="2.6"/>
<rect x="663.12" y="97.8" width="1.1" height="4.5"/>
<rect x="668.55" y="99.6" width="1.1" height="2.6"/>
<rect x="673.88" y="92.8" width="1.2" height="9.5"/>
<text x="675.78" y="97.4" font-size="6.6" font-family="Liberation Sans" fill="#ececec" textLength="9.3" lengthAdjust="spacingAndGlyphs">600</text>
<rect x="679.41" y="99.6" width="1.1" height="2.6"/>
<rect x="684.84" y="97.8" width="1.1" height="4.5"/>
<rect x="690.26" y="99.6" width="1.1" height="2.6"/>
<rect x="695.69" y="97.8" width="1.1" height="4.5"/>
<rect x="701.12" y="99.6" width="1.1" height="2.6"/>
<rect x="706.55" y="97.8" width="1.1" height="4.5"/>
<rect x="711.98" y="99.6" width="1.1" height="2.6"/>
<rect x="717.40" y="97.8" width="1.1" height="4.5"/>
<rect x="722.83" y="99.6" width="1.1" height="2.6"/>
<rect x="728.16" y="92.8" width="1.2" height="9.5"/>
<text x="730.06" y="97.4" font-size="6.6" font-family="Liberation Sans" fill="#ececec" textLength="9.3" lengthAdjust="spacingAndGlyphs">700</text>
<rect x="733.69" y="99.6" width="1.1" height="2.6"/>
<rect x="739.12" y="97.8" width="1.1" height="4.5"/>
<rect x="744.54" y="99.6" width="1.1" height="2.6"/>
<rect x="749.97" y="97.8" width="1.1" height="4.5"/>
<rect x="755.40" y="99.6" width="1.1" height="2.6"/>
<rect x="760.83" y="97.8" width="1.1" height="4.5"/>
<rect x="766.26" y="99.6" width="1.1" height="2.6"/>
<rect x="771.68" y="97.8" width="1.1" height="4.5"/>
<rect x="777.11" y="99.6" width="1.1" height="2.6"/>
<rect x="782.44" y="92.8" width="1.2" height="9.5"/>
<text x="784.34" y="97.4" font-size="6.6" font-family="Liberation Sans" fill="#ececec" textLength="9.3" lengthAdjust="spacingAndGlyphs">800</text>
<rect x="787.97" y="99.6" width="1.1" height="2.6"/>
<rect x="793.40" y="97.8" width="1.1" height="4.5"/>
<rect x="798.82" y="99.6" width="1.1" height="2.6"/>
<rect x="804.25" y="97.8" width="1.1" height="4.5"/>
<rect x="809.68" y="99.6" width="1.1" height="2.6"/>
<rect x="815.11" y="97.8" width="1.1" height="4.5"/>
<rect x="820.54" y="99.6" width="1.1" height="2.6"/>
<rect x="825.96" y="97.8" width="1.1" height="4.5"/>
<rect x="831.39" y="99.6" width="1.1" height="2.6"/>
<rect x="836.72" y="92.8" width="1.2" height="9.5"/>
<text x="838.62" y="97.4" font-size="6.6" font-family="Liberation Sans" fill="#ececec" textLength="9.3" lengthAdjust="spacingAndGlyphs">900</text>
<rect x="842.25" y="99.6" width="1.1" height="2.6"/>
<rect x="847.68" y="97.8" width="1.1" height="4.5"/>
<rect x="853.10" y="99.6" width="1.1" height="2.6"/>
<rect x="858.53" y="97.8" width="1.1" height="4.5"/>
<rect x="863.96" y="99.6" width="1.1" height="2.6"/>
<rect x="869.39" y="97.8" width="1.1" height="4.5"/>
<rect x="874.82" y="99.6" width="1.1" height="2.6"/>
<rect x="880.24" y="97.8" width="1.1" height="4.5"/>
<rect x="885.67" y="99.6" width="1.1" height="2.6"/>
<rect x="891.00" y="92.8" width="1.2" height="9.5"/>
<text x="892.90" y="97.4" font-size="6.6" font-family="Liberation Sans" fill="#ececec" textLength="12.4" lengthAdjust="spacingAndGlyphs">1000</text>
<rect x="896.53" y="99.6" width="1.1" height="2.6"/>
<rect x="901.96" y="97.8" width="1.1" height="4.5"/>
<rect x="907.38" y="99.6" width="1.1" height="2.6"/>
<rect x="912.81" y="97.8" width="1.1" height="4.5"/>
<rect x="918.24" y="99.6" width="1.1" height="2.6"/>
<rect x="923.67" y="97.8" width="1.1" height="4.5"/>
<rect x="929.10" y="99.6" width="1.1" height="2.6"/>
<rect x="934.52" y="97.8" width="1.1" height="4.5"/>
<rect x="939.95" y="99.6" width="1.1" height="2.6"/>
<rect x="945.28" y="92.8" width="1.2" height="9.5"/>
<text x="947.18" y="97.4" font-size="6.6" font-family="Liberation Sans" fill="#ececec" textLength="12.4" lengthAdjust="spacingAndGlyphs">1100</text>
<rect x="162.3" y="104" width="1.7" height="589"/>
<rect x="154.5" y="104.50" width="1" height="2"/>
<text x="153.3" y="112.50" font-size="7" font-family="Liberation Sans" fill="#ececec" textLength="3.7" lengthAdjust="spacingAndGlyphs">1</text>
<text x="153.3" y="119.00" font-size="7" font-family="Liberation Sans" fill="#ececec" textLength="3.7" lengthAdjust="spacingAndGlyphs">0</text>
<text x="153.3" y="125.50" font-size="7" font-family="Liberation Sans" fill="#ececec" textLength="3.7" lengthAdjust="spacingAndGlyphs">0</text>
<rect x="159.6" y="105.25" width="2.7" height="1.1"/>
<rect x="157.8" y="110.68" width="4.5" height="1.1"/>
<rect x="159.6" y="116.10" width="2.7" height="1.1"/>
<rect x="157.8" y="121.53" width="4.5" height="1.1"/>
<rect x="159.6" y="126.96" width="2.7" height="1.1"/>
<rect x="157.8" y="132.39" width="4.5" height="1.1"/>
<rect x="159.6" y="137.82" width="2.7" height="1.1"/>
<rect x="157.8" y="143.24" width="4.5" height="1.1"/>
<rect x="159.6" y="148.67" width="2.7" height="1.1"/>
<rect x="153" y="154.00" width="9.5" height="1.2"/>
<text x="153.3" y="161.30" font-size="7" font-family="Liberation Sans" fill="#ececec" textLength="3.7" lengthAdjust="spacingAndGlyphs">0</text>
<rect x="159.6" y="159.53" width="2.7" height="1.1"/>
<rect x="157.8" y="164.96" width="4.5" height="1.1"/>
<rect x="159.6" y="170.38" width="2.7" height="1.1"/>
<rect x="157.8" y="175.81" width="4.5" height="1.1"/>
<rect x="159.6" y="181.24" width="2.7" height="1.1"/>
<rect x="157.8" y="186.67" width="4.5" height="1.1"/>
<rect x="159.6" y="192.10" width="2.7" height="1.1"/>
<rect x="157.8" y="197.52" width="4.5" height="1.1"/>
<rect x="159.6" y="202.95" width="2.7" height="1.1"/>
<rect x="153" y="208.28" width="9.5" height="1.2"/>
<text x="153.3" y="215.58" font-size="7" font-family="Liberation Sans" fill="#ececec" textLength="3.7" lengthAdjust="spacingAndGlyphs">1</text>
<text x="153.3" y="222.08" font-size="7" font-family="Liberation Sans" fill="#ececec" textLength="3.7" lengthAdjust="spacingAndGlyphs">0</text>
<text x="153.3" y="228.58" font-size="7" font-family="Liberation Sans" fill="#ececec" textLength="3.7" lengthAdjust="spacingAndGlyphs">0</text>
<rect x="159.6" y="213.81" width="2.7" height="1.1"/>
<rect x="157.8" y="219.24" width="4.5" height="1.1"/>
<rect x="159.6" y="224.66" width="2.7" height="1.1"/>
<rect x="157.8" y="230.09" width="4.5" height="1.1"/>
<rect x="159.6" y="235.52" width="2.7" height="1.1"/>
<rect x="157.8" y="240.95" width="4.5" height="1.1"/>
<rect x="159.6" y="246.38" width="2.7" height="1.1"/>
<rect x="157.8" y="251.80" width="4.5" height="1.1"/>
<rect x="159.6" y="257.23" width="2.7" height="1.1"/>
<rect x="153" y="262.56" width="9.5" height="1.2"/>
<text x="153.3" y="269.86" font-size="7" font-family="Liberation Sans" fill="#ececec" textLength="3.7" lengthAdjust="spacingAndGlyphs">2</text>
<text x="153.3" y="276.36" font-size="7" font-family="Liberation Sans" fill="#ececec" textLength="3.7" lengthAdjust="spacingAndGlyphs">0</text>
<text x="153.3" y="282.86" font-size="7" font-family="Liberation Sans" fill="#ececec" textLength="3.7" lengthAdjust="spacingAndGlyphs">0</text>
<rect x="159.6" y="268.09" width="2.7" height="1.1"/>
<rect x="157.8" y="273.52" width="4.5" height="1.1"/>
<rect x="159.6" y="278.94" width="2.7" height="1.1"/>
<rect x="157.8" y="284.37" width="4.5" height="1.1"/>
<rect x="159.6" y="289.80" width="2.7" height="1.1"/>
<rect x="157.8" y="295.23" width="4.5" height="1.1"/>
<rect x="159.6" y="300.66" width="2.7" height="1.1"/>
<rect x="157.8" y="306.08" width="4.5" height="1.1"/>
<rect x="159.6" y="311.51" width="2.7" height="1.1"/>
<rect x="153" y="316.84" width="9.5" height="1.2"/>
<text x="153.3" y="324.14" font-size="7" font-family="Liberation Sans" fill="#ececec" textLength="3.7" lengthAdjust="spacingAndGlyphs">3</text>
<text x="153.3" y="330.64" font-size="7" font-family="Liberation Sans" fill="#ececec" textLength="3.7" lengthAdjust="spacingAndGlyphs">0</text>
<text x="153.3" y="337.14" font-size="7" font-family="Liberation Sans" fill="#ececec" textLength="3.7" lengthAdjust="spacingAndGlyphs">0</text>
<rect x="159.6" y="322.37" width="2.7" height="1.1"/>
<rect x="157.8" y="327.80" width="4.5" height="1.1"/>
<rect x="159.6" y="333.22" width="2.7" height="1.1"/>
<rect x="157.8" y="338.65" width="4.5" height="1.1"/>
<rect x="159.6" y="344.08" width="2.7" height="1.1"/>
<rect x="157.8" y="349.51" width="4.5" height="1.1"/>
<rect x="159.6" y="354.94" width="2.7" height="1.1"/>
<rect x="157.8" y="360.36" width="4.5" height="1.1"/>
<rect x="159.6" y="365.79" width="2.7" height="1.1"/>
<rect x="153" y="371.12" width="9.5" height="1.2"/>
<text x="153.3" y="378.42" font-size="7" font-family="Liberation Sans" fill="#ececec" textLength="3.7" lengthAdjust="spacingAndGlyphs">4</text>
<text x="153.3" y="384.92" font-size="7" font-family="Liberation Sans" fill="#ececec" textLength="3.7" lengthAdjust="spacingAndGlyphs">0</text>
<text x="153.3" y="391.42" font-size="7" font-family="Liberation Sans" fill="#ececec" textLength="3.7" lengthAdjust="spacingAndGlyphs">0</text>
<rect x="159.6" y="376.65" width="2.7" height="1.1"/>
<rect x="157.8" y="382.08" width="4.5" height="1.1"/>
<rect x="159.6" y="387.50" width="2.7" height="1.1"/>
<rect x="157.8" y="392.93" width="4.5" height="1.1"/>
<rect x="159.6" y="398.36" width="2.7" height="1.1"/>
<rect x="157.8" y="403.79" width="4.5" height="1.1"/>
<rect x="159.6" y="409.22" width="2.7" height="1.1"/>
<rect x="157.8" y="414.64" width="4.5" height="1.1"/>
<rect x="159.6" y="420.07" width="2.7" height="1.1"/>
<rect x="153" y="425.40" width="9.5" height="1.2"/>
<text x="153.3" y="432.70" font-size="7" font-family="Liberation Sans" fill="#ececec" textLength="3.7" lengthAdjust="spacingAndGlyphs">5</text>
<text x="153.3" y="439.20" font-size="7" font-family="Liberation Sans" fill="#ececec" textLength="3.7" lengthAdjust="spacingAndGlyphs">0</text>
<text x="153.3" y="445.70" font-size="7" font-family="Liberation Sans" fill="#ececec" textLength="3.7" lengthAdjust="spacingAndGlyphs">0</text>
<rect x="159.6" y="430.93" width="2.7" height="1.1"/>
<rect x="157.8" y="436.36" width="4.5" height="1.1"/>
<rect x="159.6" y="441.78" width="2.7" height="1.1"/>
<rect x="157.8" y="447.21" width="4.5" height="1.1"/>
<rect x="159.6" y="452.64" width="2.7" height="1.1"/>
<rect x="157.8" y="458.07" width="4.5" height="1.1"/>
<rect x="159.6" y="463.50" width="2.7" height="1.1"/>
<rect x="157.8" y="468.92" width="4.5" height="1.1"/>
<rect x="159.6" y="474.35" width="2.7" height="1.1"/>
<rect x="153" y="479.68" width="9.5" height="1.2"/>
<text x="153.3" y="486.98" font-size="7" font-family="Liberation Sans" fill="#ececec" textLength="3.7" lengthAdjust="spacingAndGlyphs">6</text>
<text x="153.3" y="493.48" font-size="7" font-family="Liberation Sans" fill="#ececec" textLength="3.7" lengthAdjust="spacingAndGlyphs">0</text>
<text x="153.3" y="499.98" font-size="7" font-family="Liberation Sans" fill="#ececec" textLength="3.7" lengthAdjust="spacingAndGlyphs">0</text>
<rect x="159.6" y="485.21" width="2.7" height="1.1"/>
<rect x="157.8" y="490.64" width="4.5" height="1.1"/>
<rect x="159.6" y="496.06" width="2.7" height="1.1"/>
<rect x="157.8" y="501.49" width="4.5" height="1.1"/>
<rect x="159.6" y="506.92" width="2.7" height="1.1"/>
<rect x="157.8" y="512.35" width="4.5" height="1.1"/>
<rect x="159.6" y="517.78" width="2.7" height="1.1"/>
<rect x="157.8" y="523.20" width="4.5" height="1.1"/>
<rect x="159.6" y="528.63" width="2.7" height="1.1"/>
<rect x="153" y="533.96" width="9.5" height="1.2"/>
<text x="153.3" y="541.26" font-size="7" font-family="Liberation Sans" fill="#ececec" textLength="3.7" lengthAdjust="spacingAndGlyphs">7</text>
<text x="153.3" y="547.76" font-size="7" font-family="Liberation Sans" fill="#ececec" textLength="3.7" lengthAdjust="spacingAndGlyphs">0</text>
<text x="153.3" y="554.26" font-size="7" font-family="Liberation Sans" fill="#ececec" textLength="3.7" lengthAdjust="spacingAndGlyphs">0</text>
<rect x="159.6" y="539.49" width="2.7" height="1.1"/>
<rect x="157.8" y="544.92" width="4.5" height="1.1"/>
<rect x="159.6" y="550.34" width="2.7" height="1.1"/>
<rect x="157.8" y="555.77" width="4.5" height="1.1"/>
<rect x="159.6" y="561.20" width="2.7" height="1.1"/>
<rect x="157.8" y="566.63" width="4.5" height="1.1"/>
<rect x="159.6" y="572.06" width="2.7" height="1.1"/>
<rect x="157.8" y="577.48" width="4.5" height="1.1"/>
<rect x="159.6" y="582.91" width="2.7" height="1.1"/>
<rect x="153" y="588.24" width="9.5" height="1.2"/>
<text x="153.3" y="595.54" font-size="7" font-family="Liberation Sans" fill="#ececec" textLength="3.7" lengthAdjust="spacingAndGlyphs">8</text>
<text x="153.3" y="602.04" font-size="7" font-family="Liberation Sans" fill="#ececec" textLength="3.7" lengthAdjust="spacingAndGlyphs">0</text>
<text x="153.3" y="608.54" font-size="7" font-family="Liberation Sans" fill="#ececec" textLength="3.7" lengthAdjust="spacingAndGlyphs">0</text>
<rect x="159.6" y="593.77" width="2.7" height="1.1"/>
<rect x="157.8" y="599.20" width="4.5" height="1.1"/>
<rect x="159.6" y="604.62" width="2.7" height="1.1"/>
<rect x="157.8" y="610.05" width="4.5" height="1.1"/>
<rect x="159.6" y="615.48" width="2.7" height="1.1"/>
<rect x="157.8" y="620.91" width="4.5" height="1.1"/>
<rect x="159.6" y="626.34" width="2.7" height="1.1"/>
<rect x="157.8" y="631.76" width="4.5" height="1.1"/>
<rect x="159.6" y="637.19" width="2.7" height="1.1"/>
<rect x="153" y="642.52" width="9.5" height="1.2"/>
<text x="153.3" y="649.82" font-size="7" font-family="Liberation Sans" fill="#ececec" textLength="3.7" lengthAdjust="spacingAndGlyphs">9</text>
<text x="153.3" y="656.32" font-size="7" font-family="Liberation Sans" fill="#ececec" textLength="3.7" lengthAdjust="spacingAndGlyphs">0</text>
<text x="153.3" y="662.82" font-size="7" font-family="Liberation Sans" fill="#ececec" textLength="3.7" lengthAdjust="spacingAndGlyphs">0</text>
<rect x="159.6" y="648.05" width="2.7" height="1.1"/>
<rect x="157.8" y="653.48" width="4.5" height="1.1"/>
<rect x="159.6" y="658.90" width="2.7" height="1.1"/>
<rect x="157.8" y="664.33" width="4.5" height="1.1"/>
<rect x="159.6" y="669.76" width="2.7" height="1.1"/>
<rect x="157.8" y="675.19" width="4.5" height="1.1"/>
<rect x="159.6" y="680.62" width="2.7" height="1.1"/>
<rect x="157.8" y="686.04" width="4.5" height="1.1"/>
<rect x="159.6" y="691.47" width="2.7" height="1.1"/>
</g></svg>
<svg class="a" style="left:155px;top:95px" width="20" height="262" viewBox="155 95 20 262">
 <path d="M165 99.3 L172.5 99.3 L168.7 103 Z" fill="#e6e6e6"/>
 <path d="M158 345.5 L158 353.5 L162.5 349.5 Z" fill="#e6e6e6"/>
</svg>
<div class="a" style="left:147px;top:378px;width:2.5px;height:16px;background:repeating-linear-gradient(180deg,#aaa 0 3px,transparent 3px 5.5px)"></div>
<!-- canvas -->
<div class="a" style="left:347px;top:153px;width:420px;height:490px;background:#fff"></div>
<svg class="a" style="left:347px;top:153px" width="420" height="490" viewBox="347 153 420 490">
 <defs>
  <filter id="tex" x="0" y="0" width="100%" height="100%" color-interpolation-filters="sRGB">
   <feTurbulence type="fractalNoise" baseFrequency="0.13" numOctaves="4" seed="11" result="n"/>
   <feColorMatrix in="n" type="matrix" values="0 0 0 0 0.55  0 0 0 0 0.45  0 0 0 0 0.25  0 0 0 -0.6 0.38" result="c"/>
   <feComposite in="c" in2="SourceGraphic" operator="in"/>
  </filter>
  <filter id="grain" x="0" y="0" width="100%" height="100%" color-interpolation-filters="sRGB">
   <feTurbulence type="fractalNoise" baseFrequency="0.9" numOctaves="1" seed="3" result="n"/>
   <feColorMatrix in="n" type="matrix" values="0 0 0 0 0.55  0 0 0 0 0.42  0 0 0 0 0.2  0 0 0 -1.8 1.0" result="c"/>
   <feComposite in="c" in2="SourceGraphic" operator="in"/>
  </filter>
  <filter id="light" x="0" y="0" width="100%" height="100%" color-interpolation-filters="sRGB">
   <feTurbulence type="fractalNoise" baseFrequency="0.5" numOctaves="1" seed="9" result="n"/>
   <feColorMatrix in="n" type="matrix" values="0 0 0 0 0.93  0 0 0 0 0.82  0 0 0 0 0.6  0 0 0 2.6 -1.45" result="c"/>
   <feComposite in="c" in2="SourceGraphic" operator="in"/>
  </filter>
  <linearGradient id="bodyH" x1="0" x2="1" y1="0" y2="0">
   <stop offset="0" stop-color="#a86e35"/>
   <stop offset="0.02" stop-color="#ba8c52"/>
   <stop offset="0.06" stop-color="#c9a46c"/>
   <stop offset="0.18" stop-color="#d4b57f"/>
   <stop offset="0.5" stop-color="#dcc08c"/>
   <stop offset="0.82" stop-color="#d4b57f"/>
   <stop offset="0.94" stop-color="#c9a46c"/>
   <stop offset="0.98" stop-color="#ba8c52"/>
   <stop offset="1" stop-color="#a86e35"/>
  </linearGradient>
  <linearGradient id="bodyV" x1="0" x2="0" y1="0" y2="1">
   <stop offset="0" stop-color="#6a3a15" stop-opacity="0.8"/>
   <stop offset="0.012" stop-color="#6a3a15" stop-opacity="0.6"/>
   <stop offset="0.025" stop-color="#7a4a20" stop-opacity="0.25"/>
   <stop offset="0.06" stop-color="#7a4a20" stop-opacity="0.06"/>
   <stop offset="0.5" stop-color="#7a4a20" stop-opacity="0"/>
   <stop offset="0.9" stop-color="#7a4a20" stop-opacity="0.06"/>
   <stop offset="0.97" stop-color="#7a4a20" stop-opacity="0.3"/>
   <stop offset="1" stop-color="#5a3008" stop-opacity="0.55"/>
  </linearGradient>
  <linearGradient id="rollV" x1="0" x2="0" y1="0" y2="1">
   <stop offset="0" stop-color="#b47e3a"/>
   <stop offset="0.2" stop-color="#d0a560"/>
   <stop offset="0.5" stop-color="#d9b06a"/>
   <stop offset="0.8" stop-color="#cc9f5a"/>
   <stop offset="1" stop-color="#ad7636"/>
  </linearGradient>
  <linearGradient id="rollH" x1="0" x2="1" y1="0" y2="0">
   <stop offset="0" stop-color="#8a5a20" stop-opacity="0.35"/>
   <stop offset="0.05" stop-color="#8a5a20" stop-opacity="0"/>
   <stop offset="0.95" stop-color="#8a5a20" stop-opacity="0"/>
   <stop offset="1" stop-color="#8a5a20" stop-opacity="0.35"/>
  </linearGradient>
  <radialGradient id="knob" cx="0.35" cy="0.4" r="0.7">
   <stop offset="0" stop-color="#dc926a"/>
   <stop offset="0.6" stop-color="#c46e40"/>
   <stop offset="1" stop-color="#a4542a"/>
  </radialGradient>
  <linearGradient id="rod" x1="0" x2="0" y1="0" y2="1">
   <stop offset="0" stop-color="#c77a4a"/>
   <stop offset="0.5" stop-color="#bd6836"/>
   <stop offset="1" stop-color="#9f5026"/>
  </linearGradient>
  <path id="bodyp" d="M419 210 L690 210 L689.4 214.0 L689.9 221.7 L689.8 230.4 L687.5 239.0 L690.4 245.4 L690.3 252.6 L688.9 257.2 L689.1 262.4 L687.4 269.3 L688.3 274.4 L689.9 282.9 L690.0 287.7 L689.4 292.4 L687.4 297.1 L688.1 305.4 L690.5 310.5 L688.3 318.9 L689.1 327.7 L688.1 335.1 L689.6 343.8 L690.3 352.6 L688.6 358.1 L687.9 362.9 L688.4 367.2 L687.4 374.3 L688.5 381.7 L690.0 387.2 L688.4 393.6 L689.7 400.0 L690.5 404.3 L689.8 408.4 L687.5 416.6 L688.6 424.6 L687.4 431.5 L688.0 435.7 L688.0 444.5 L690.4 452.3 L688.5 461.0 L689.1 466.7 L687.7 474.6 L690.0 482.4 L687.5 490.7 L687.7 499.4 L689.4 505.1 L688.5 513.7 L689.1 522.3 L688.4 527.9 L687.7 532.7 L689.6 537.5 L687.9 546.5 L690.6 550.7 L688.7 557.4 L689.3 562.6 L688.9 570.7 L687.6 576.8 L688 581 L421 581 L418.4 580.0 L421.4 573.5 L421.0 568.9 L420.6 560.1 L418.7 552.2 L418.9 546.0 L419.4 537.8 L422.0 531.5 L421.9 523.3 L420.1 517.0 L420.1 509.4 L419.8 503.9 L419.7 499.2 L421.9 490.2 L420.1 483.1 L418.6 477.4 L421.2 472.0 L419.6 463.7 L421.2 455.8 L420.8 448.3 L419.6 440.5 L419.3 433.0 L421.1 426.5 L419.4 419.1 L420.7 410.4 L418.3 403.5 L419.2 396.7 L420.0 389.4 L420.7 381.3 L419.6 373.3 L421.0 366.1 L419.6 357.9 L421.5 349.7 L421.9 342.3 L420.2 333.5 L418.9 326.8 L421.8 318.7 L420.9 312.3 L421.0 304.7 L421.2 299.8 L420.8 292.9 L420.6 286.8 L420.7 278.9 L418.4 271.3 L419.9 266.5 L419.1 259.3 L420.6 251.9 L420.0 247.6 L418.5 242.5 L419.5 237.8 L419.0 232.9 L420.0 228.8 L420.6 222.9 L419.2 215.9 Z"/>
  <path id="troll" d="M411.5 178 Q555 184.5 696.5 178.7 L697 215.3 Q555 211.5 412 216.4 Z"/>
  <path id="broll" d="M411.5 580 L697 573.5 L697 612 Q555 608.5 412 617 Z"/>
 </defs>
 <use href="#bodyp" fill="url(#bodyH)"/>
 <use href="#bodyp" fill="#000" filter="url(#tex)"/>
 <use href="#bodyp" fill="#000" filter="url(#grain)" opacity="0.45"/>
 <use href="#bodyp" fill="#000" filter="url(#light)" opacity="0.4"/>
 <use href="#bodyp" fill="url(#bodyV)"/>
 <linearGradient id="shV" x1="0" x2="0" y1="0" y2="1"><stop offset="0" stop-color="#6a3812" stop-opacity="0.75"/><stop offset="0.45" stop-color="#7a4518" stop-opacity="0.45"/><stop offset="1" stop-color="#7a4518" stop-opacity="0"/></linearGradient>
 <path d="M418 213 Q555 209.5 691 213 L691 224 Q555 220.5 418 224 Z" fill="url(#shV)"/>
 <!-- knobs -->
 <path d="M395 190.5 Q404 191.5 412 191 L412 204 Q404 203.5 395 204.5 Z" fill="url(#rod)"/>
 <rect x="393.5" y="189.3" width="3.2" height="16" rx="1.6" fill="#b5602f"/>
 <rect x="389.5" y="189" width="3.6" height="16.6" rx="1.8" fill="#c06f40"/>
 <path d="M389.8 190 Q384 187.8 378 188 Q369.5 188.5 369.5 197.3 Q369.5 206.2 378 206.6 Q384 206.8 389.8 204.6 Z" fill="url(#knob)"/>
 <path d="M697 191 Q705 191.5 714 190.5 L714 204.5 Q705 203.5 697 204 Z" fill="url(#rod)"/>
 <rect x="712.3" y="189.3" width="3.2" height="16" rx="1.6" fill="#b5602f"/>
 <rect x="716" y="189" width="3.6" height="16.6" rx="1.8" fill="#c06f40"/>
 <path d="M719.3 190 Q725 187.8 731 188 Q739.5 188.5 739.5 197.3 Q739.5 206.2 731 206.6 Q725 206.8 719.3 204.6 Z" fill="url(#knob)"/>
 <!-- rolls -->
 <use href="#troll" fill="url(#rollV)"/>
 <use href="#troll" fill="#000" filter="url(#tex)" opacity="0.8"/>
 <use href="#troll" fill="#000" filter="url(#grain)" opacity="0.5"/>
 <use href="#troll" fill="#000" filter="url(#light)" opacity="0.45"/>
 <use href="#troll" fill="url(#rollH)"/>
 <use href="#broll" fill="url(#rollV)"/>
 <use href="#broll" fill="#000" filter="url(#tex)" opacity="0.8"/>
 <use href="#broll" fill="#000" filter="url(#grain)" opacity="0.5"/>
 <use href="#broll" fill="#000" filter="url(#light)" opacity="0.45"/>
 <use href="#broll" fill="url(#rollH)"/>
</svg>

<svg class="a" style="left:347px;top:153px" width="420" height="490" viewBox="0 0 420 490">
 <rect x="0.5" y="0.5" width="419" height="489" fill="none" stroke="#111" stroke-width="1"/>
 <rect x="0.5" y="0.5" width="419" height="489" fill="none" stroke="#f2f200" stroke-width="1" stroke-dasharray="2.5 2.5"/>
</svg>
<!-- scrollbars -->
<div class="a" style="left:952.5px;top:105px;width:11px;height:588px;background:#5b5b5b;border:1px solid #333;border-radius:2px"></div>
<div class="a" style="left:166px;top:694.5px;width:785px;height:11.5px;background:#5b5b5b;border:1px solid #333;border-radius:2px"></div>
<svg class="a" style="left:952px;top:92px" width="12" height="12" viewBox="0 0 12 12">
 <rect x="0.75" y="0.75" width="10.5" height="10.5" fill="#5a5a5a" stroke="#8a8a8a" stroke-width="1.5"/>
 <circle cx="6" cy="6" r="3" fill="#888" stroke="#bbb" stroke-width="1"/>
</svg>
<svg class="a" style="left:153px;top:695.5px" width="11" height="11" viewBox="0 0 11 11">
 <rect x="0.5" y="0.5" width="9.5" height="9.5" fill="#5a5a5a" stroke="#aaa" stroke-width="1" stroke-dasharray="1 1"/>
</svg>
<svg class="a" style="left:951px;top:694px" width="16" height="16" viewBox="0 0 16 16">
 <path d="M8 1 L14.5 14 L8 10.5 L1.5 14 Z" fill="#d0d0d0"/>
</svg>
<!-- status bar -->
<div class="a" style="left:214.5px;top:709px;width:34px;height:19px;background:#363636;border-radius:2px"></div>
<div class="a txt" style="left:220px;top:713px;font-size:9px;color:#ddd">px</div>
<svg class="a" style="left:233px;top:713px" width="12" height="10" viewBox="0 0 12 10"><path d="M1.5 3 L6 7.5 L10.5 3" stroke="#ddd" stroke-width="1.3" fill="none"/></svg>
<div class="a" style="left:249px;top:709px;width:28px;height:19px;background:#3b3b3b"></div>
<div class="a txt" style="left:249.5px;top:713.5px;font-size:8.9px;letter-spacing:-0.2px;color:#ddd">66.7%</div>
<div class="a" style="left:277.5px;top:709px;width:12.5px;height:19px;background:#363636;border-radius:2px"></div>
<svg class="a" style="left:278px;top:713px" width="12" height="10" viewBox="0 0 12 10"><path d="M2 3 L6 7 L10 3" stroke="#ddd" stroke-width="1.3" fill="none"/></svg>
<div class="a txt" style="left:291px;top:712px;font-size:10px;color:#e6e6e6">scroll-page-3310902.webp (11.4 MB)</div>
<div class="a" style="left:150px;top:729px;width:816px;height:2px;background:#555"></div>

<!-- right dock -->
<div class="a" style="left:963.5px;top:43px;width:3px;height:688px;background:#393939"></div>
<div class="a" style="left:966px;top:43px;width:4px;height:688px;background:#4a4a4a"></div>
<div class="a" style="left:970px;top:43px;width:164px;height:688px;background:#3c3c3c"></div>
<!-- top tabs -->
<div class="a" style="left:970px;top:43px;width:76px;height:18px;background:#2b2b2b"></div>
<div class="a" style="left:1046px;top:43px;width:18px;height:19px;background:#444"></div>
<div class="a" style="left:1064px;top:43px;width:1px;height:19px;background:#333"></div>
<svg class="a" style="left:970px;top:43px" width="164" height="20" viewBox="970 43 164 20">
 <rect x="972" y="46" width="14.5" height="14" fill="#fff"/>
 <path d="M974.5 49 Q979 46.5 984 48.5 L986 53 L985 58 Q980 60 975 58.5 Q973.5 54 974.5 49 Z" fill="#000"/>
 <rect x="983" y="57" width="3" height="3" fill="#5a78d8"/>
 <rect x="992" y="46" width="14" height="14" fill="#f0b155"/>
 <rect x="994" y="46" width="2" height="14" fill="#f7cf7a"/><rect x="999" y="46" width="2" height="14" fill="#f4c36a"/><rect x="1003" y="46" width="2" height="14" fill="#e7a24a"/>
 <rect x="1011.5" y="46" width="14" height="14" fill="#fff"/>
 <text x="1013" y="57" font-size="9" font-family="Liberation Sans" fill="#222">Ac</text>
 <rect x="1031.5" y="46.5" width="11.5" height="13.5" fill="#fff"/>
 <rect x="1033.5" y="47.5" width="7.5" height="11.5" fill="#d4ae6a"/>
 <path d="M1061 46.5 L1054 54.5" stroke="#bdbdbd" stroke-width="1.6"/>
 <path d="M1054.5 54 Q1052 54 1051 57 Q1050.5 59 1049.5 60 Q1054 60 1055.5 57 Q1056 55.5 1054.5 54 Z" fill="#bdbdbd"/>
 <rect x="1121.5" y="49.5" width="8.5" height="9" fill="none" stroke="#9a9a9a" stroke-width="1"/>
 <path d="M1123.5 54 L1128 51.5 L1128 56.5 Z" fill="#bbb"/>
</svg>
<!-- brush editor -->
<div class="a" style="left:970px;top:62px;width:162px;height:288px;background:#3a3a3a;border-left:1px solid #4d4d4d;border-top:1px solid #4d4d4d"></div>
<div class="a" style="left:971px;top:64px;width:160px;height:14px;background:#262626"></div>
<div class="a txt b" style="left:974px;top:66.5px;font-size:8.3px;color:#e6e6e6">2. Hardness 100</div>
<div class="a" style="left:971px;top:77.5px;width:160.5px;height:170px;background:#111"></div>
<div class="a" style="left:971.7px;top:79px;width:159.3px;height:167.5px;background:linear-gradient(90deg,#fff 0%,#fff 88%,#e2e2e2 100%)"></div>
<svg class="a" style="left:1020px;top:130px" width="64" height="120" viewBox="1020 130 64 120">
 <circle cx="1051.2" cy="163" r="20.3" fill="#000"/>
</svg>
<svg class="a" style="left:1120px;top:235px" width="12" height="12" viewBox="1120 235 12 12">
 <path d="M1131 240 L1131 246.5 L1124.5 246.5 Z" fill="#5b7ad4"/>
</svg>
<div class="a txt" style="left:971px;top:253.5px;font-size:8.6px;color:#cfcfcf">Shape:</div>
<div class="a" style="left:1001px;top:248.5px;width:20.5px;height:20.5px;background:#2c2c2c;border-radius:2px"></div>
<svg class="a" style="left:1000px;top:248px" width="70" height="22" viewBox="1000 248 70 22">
 <circle cx="1011.3" cy="259" r="5" fill="#c2c2c2"/>
 <rect x="1027" y="253.3" width="11" height="11" fill="#c2c2c2"/>
 <path d="M1053.3 252.5 L1059.5 259 L1053.3 265.5 L1047 259 Z" fill="#c2c2c2"/>
</svg>
<!-- sliders -->
<div class="a sl" style="top:272px"></div>
<div class="a sl" style="top:284.8px"></div>
<div class="a sl" style="top:297.5px;background:#585858"></div>
<div class="a sl" style="top:310.3px"></div>
<div class="a sl" style="top:323px"></div>
<div class="a sl" style="top:335.8px"></div>
<div class="a txt sll" style="top:271.5px;color:#505050">Radius</div>
<div class="a txt slv" style="top:271.5px;color:#505050">25.0</div>
<div class="a" style="left:972px;top:273px;width:2px;height:8px;background:#ddd"></div>
<div class="a txt sll" style="top:284.3px;color:#505050">Spikes</div>
<div class="a txt slv" style="top:284.3px;color:#505050">2</div>
<div class="a txt sll" style="top:297px;color:#f4f4f4">Hardness</div>
<div class="a txt slv" style="top:297px;color:#f4f4f4">1.00</div>
<div class="a txt sll" style="top:309.8px;color:#505050">Aspect ratio</div>
<div class="a txt slv" style="top:309.8px;color:#505050">1.0</div>
<div class="a txt sll" style="top:322.5px;color:#505050">Angle</div>
<div class="a txt slv" style="top:322.5px;color:#505050">0.0</div>
<div class="a txt sll" style="top:335.3px;color:#505050"><b style="color:#eee">S</b>pacing</div>
<div class="a txt slv" style="top:335.3px;color:#505050">10.0</div>
<svg class="a" style="left:1120px;top:270px" width="12" height="80" viewBox="1120 270 12 80">
 <g stroke="#6a6a6a" stroke-width="1.2" fill="none">
  <path d="M1122.5 275.5 L1125.5 272.8 L1128.5 275.5 M1122.5 278 L1125.5 280.7 L1128.5 278"/>
  <path d="M1122.5 288.3 L1125.5 285.6 L1128.5 288.3 M1122.5 290.8 L1125.5 293.5 L1128.5 290.8"/>
  <path d="M1122.5 301 L1125.5 298.3 L1128.5 301 M1122.5 303.5 L1125.5 306.2 L1128.5 303.5"/>
  <path d="M1122.5 313.8 L1125.5 311.1 L1128.5 313.8 M1122.5 316.3 L1125.5 319 L1128.5 316.3"/>
  <path d="M1122.5 326.5 L1125.5 323.8 L1128.5 326.5 M1122.5 329 L1125.5 331.7 L1128.5 329"/>
  <path d="M1122.5 339.3 L1125.5 336.6 L1128.5 339.3 M1122.5 341.8 L1125.5 344.5 L1128.5 341.8"/>
 </g>
</svg>
<div class="a" style="left:1043px;top:350px;width:15px;height:2px;background:repeating-linear-gradient(90deg,#bbb 0 3.5px,transparent 3.5px 6px)"></div>
<!-- layers dock -->
<div class="a" style="left:970px;top:353px;width:164px;height:378px;background:#3c3c3c"></div>
<div class="a" style="left:1014.5px;top:353.5px;width:97px;height:17px;background:#2c2c2c"></div>
<div class="a" style="left:970px;top:353px;width:44.5px;height:18px;background:#434343;border-top:1px solid #4f4f4f;border-right:1px solid #4f4f4f"></div>
<svg class="a" style="left:970px;top:352px" width="164" height="20" viewBox="970 352 164 20">
 <path d="M975 356 L984 356 L982.5 359 L973.5 359 Z M975 360.5 L984 360.5 L982.5 363.5 L973.5 363.5 Z M975 365 L984 365 L982.5 368 L973.5 368 Z" fill="#c0c0c0"/>
 <rect x="1015.5" y="355" width="13" height="14" fill="none" stroke="#9a9a9a" stroke-width="1.2"/>
 <path d="M1019 357.5 V366.5 M1022 357.5 V366.5 M1025 357.5 V366.5" stroke="#c0c0c0" stroke-width="1.2"/>
 <path d="M1071.5 358 L1074 358 L1076 361 L1079 361 L1081 358 L1084 358" stroke="#c0c0c0" stroke-width="1.3" fill="none"/>
 <path d="M1072.5 367 Q1077 359 1083 367" stroke="#c0c0c0" stroke-width="1.4" fill="none"/>
 <rect x="1121.5" y="358.5" width="8.5" height="9" fill="none" stroke="#9a9a9a" stroke-width="1"/>
 <path d="M1123.5 363 L1128 360.5 L1128 365.5 Z" fill="#bbb"/>
</svg>
<div class="a txt" style="left:985.5px;top:356.5px;font-size:8.5px;color:#e6e6e6">Layers</div>
<div class="a txt" style="left:1030.5px;top:356.5px;font-size:8.5px;color:#e0e0e0">Channels</div>
<div class="a txt" style="left:1085.5px;top:356.5px;font-size:8.5px;color:#e0e0e0">Paths</div>
<div class="a" style="left:971.7px;top:372px;width:120.5px;height:20.3px;background:#2a2a2a;border-radius:3px"></div>
<div class="a" style="left:1094.5px;top:372px;width:36.5px;height:20.3px;background:#2a2a2a;border-radius:3px"></div>
<div class="a txt" style="left:976.5px;top:377px;font-size:8.5px;color:#e0e0e0">Mode</div>
<div class="a txt" style="left:1045.5px;top:377px;font-size:8.5px;color:#e0e0e0">Normal</div>
<svg class="a" style="left:1076px;top:376px" width="56" height="14" viewBox="1076 376 56 14">
 <path d="M1078.5 379.5 L1083.3 384.3 L1088 379.5" stroke="#ddd" stroke-width="1.4" fill="none"/>
 <path d="M1115.5 379.5 L1120.3 384.3 L1125 379.5" stroke="#ddd" stroke-width="1.4" fill="none"/>
 <path d="M1102 385.5 A4.5 4.5 0 1 0 1102 378" stroke="#ccc" stroke-width="1.4" fill="none"/>
 <path d="M1099 376.5 L1102.5 378 L1099.5 380.5 Z" fill="#ccc"/>
 <circle cx="1100" cy="387" r="1.6" fill="#ccc"/>
</svg>
<div class="a" style="left:971.5px;top:394.5px;width:160px;height:11.5px;background:#585858;border:1px solid #686868;border-radius:2px"></div>
<div class="a" style="left:1120px;top:395.5px;width:10px;height:9.5px;background:#2e2e2e"></div>
<div class="a txt" style="left:972.7px;top:395px;font-size:8.5px;color:#ececec">Opacity</div>
<div class="a txt" style="left:1096px;top:395px;font-size:8.5px;color:#ececec">100.0</div>
<svg class="a" style="left:1120px;top:394px" width="12" height="12" viewBox="0 0 12 12"><path d="M2.5 4.5 L5.5 2 L8.5 4.5 M2.5 7.5 L5.5 10 L8.5 7.5" stroke="#aaa" stroke-width="1.1" fill="none"/></svg>
<div class="a txt" style="left:971px;top:412.5px;font-size:8.5px;color:#e6e6e6">Lock:</div>
<svg class="a" style="left:995px;top:408px" width="62" height="18" viewBox="995 408 62 18">
 <path d="M1009.5 410.5 L1002 419" stroke="#c0c0c0" stroke-width="1.5"/>
 <path d="M1002.5 418.5 Q1000 418.5 999.5 421 L998 423.5 Q1002 423.5 1003.5 421 Q1004 419.5 1002.5 418.5 Z" fill="#c0c0c0"/>
 <path d="M1024.8 410.5 L1027 413 L1025.5 413 L1025.5 416 L1028.5 416 L1028.5 414.5 L1031 416.7 L1028.5 419 L1028.5 417.5 L1025.5 417.5 L1025.5 420.5 L1027 420.5 L1024.8 423 L1022.5 420.5 L1024 420.5 L1024 417.5 L1021 417.5 L1021 419 L1018.5 416.7 L1021 414.5 L1021 416 L1024 416 L1024 413 L1022.5 413 Z" fill="#c8c8c8"/>
 <g fill="#9a9a9a"><rect x="1040" y="410" width="14" height="14" fill="#4a4a4a"/>
 <rect x="1040" y="410" width="3.5" height="3.5"/><rect x="1047" y="410" width="3.5" height="3.5"/>
 <rect x="1043.5" y="413.5" width="3.5" height="3.5"/><rect x="1050.5" y="413.5" width="3.5" height="3.5"/>
 <rect x="1040" y="417" width="3.5" height="3.5"/><rect x="1047" y="417" width="3.5" height="3.5"/>
 <rect x="1043.5" y="420.5" width="3.5" height="3.5"/><rect x="1050.5" y="420.5" width="3.5" height="3.5"/></g>
</svg>
<div class="a" style="left:971.7px;top:428.6px;width:159.5px;height:266px;background:#303030"></div>
<div class="a" style="left:971.7px;top:428.6px;width:159.5px;height:32.5px;background:#232323"></div>
<svg class="a" style="left:972px;top:436px" width="22" height="18" viewBox="972 436 22 18">
 <path d="M975.5 445.3 Q983 437.3 990.5 445.3 Q983 453 975.5 445.3 Z" fill="none" stroke="#c8c8c8" stroke-width="1.9"/>
 <circle cx="983" cy="445" r="3.2" fill="#c8c8c8"/>
 <circle cx="983" cy="445" r="1.6" fill="#232323"/>
 <circle cx="982.2" cy="444" r="0.8" fill="#c8c8c8"/>
</svg>
<div class="a" style="left:1032.8px;top:429.8px;width:26px;height:30.5px;background:#fff;border-radius:2px"></div>
<svg class="a" style="left:1033px;top:430px" width="26" height="30" viewBox="0 0 26 30">
 <rect x="6.5" y="3" width="13.5" height="24" fill="#d4b070"/>
 <rect x="5.5" y="2.5" width="15.5" height="2.5" fill="#c69a55"/>
 <rect x="5.5" y="25" width="15.5" height="2.5" fill="#c69a55"/>
 <rect x="4" y="2.8" width="18" height="0.9" fill="#b87040"/>
</svg>
<div class="a" style="left:1061px;top:439.5px;width:70px;height:12px;overflow:hidden"><div class="txt" style="font-size:8.5px;color:#f0f0f0;line-height:12px">scroll-page-3310902.webp</div></div>
<div class="a" style="left:1101px;top:694.5px;width:30px;height:11.5px;background:#262626"></div>
<div class="a" style="left:972px;top:694.5px;width:129.5px;height:11.5px;background:#5a5a5a;border:1px solid #333;border-radius:2px"></div>
<svg class="a" style="left:970px;top:708px" width="164" height="23" viewBox="970 708 164 23">
 <g fill="none" stroke="#c4c4c4" stroke-width="1.4">
  <path d="M977 713.5 L982 713.5 L985 716.5 L985 724.5 L976.5 724.5 L976.5 716"/>
  <path d="M994.5 715.5 L994.5 724.5 L1006 724.5 L1006 715.5 Z"/>
  <path d="M1014 721.5 L1019.5 716 L1025 721.5"/>
  <path d="M1033.5 716.5 L1039 722 L1044.5 716.5"/>
  <path d="M1053 716 L1061 716 L1061 722 M1057 719.5 L1065 719.5 L1065 725 L1057 725 Z"/>
  <path d="M1073.5 716.5 L1078.5 715 M1073.5 719.5 L1078.5 718 M1073.5 722.5 L1078.5 721"/>
  <path d="M1082.5 715 L1082.5 724 M1080 721.5 L1082.5 724.5 L1085 721.5"/>
 </g>
 <g fill="#c4c4c4">
  <rect x="974.5" y="712" width="1.5" height="5"/><rect x="973" y="713.8" width="5" height="1.5"/>
  <rect x="994.5" y="712.5" width="5" height="3"/>
  <rect x="999.3" y="717" width="1.8" height="6.5" fill="#3c3c3c"/><rect x="997" y="719.3" width="6.5" height="1.8" fill="#3c3c3c"/>
  <rect x="995.5" y="716.5" width="10" height="7.5"/>
  <rect x="999.3" y="717" width="1.8" height="6.5" fill="#3c3c3c"/><rect x="997" y="719.3" width="6.5" height="1.8" fill="#3c3c3c"/>
  <circle cx="1097" cy="715.5" r="2.8"/>
  <path d="M1091 725 L1091 721 Q1091 719 1094 719 L1100 719 L1103 721 L1100 725 Z"/>
  <rect x="1112" y="711.5" width="14" height="14" rx="1.5"/>
 </g>
 <path d="M1115 714.5 L1123 722.5 M1123 714.5 L1115 722.5" stroke="#3c3c3c" stroke-width="2"/>
</svg>
<div class="a" style="left:970px;top:729px;width:164px;height:2px;background:#555"></div>
<div class="a" style="left:1133px;top:41px;width:1px;height:690px;background:#2a2a2a"></div>
<svg class="a" style="left:1126px;top:723px" width="8" height="8" viewBox="0 0 8 8"><path d="M8 0 L8 8 L0 8 Q7.5 7.5 8 0 Z" fill="#b8b8b8"/></svg>



</body></html>
